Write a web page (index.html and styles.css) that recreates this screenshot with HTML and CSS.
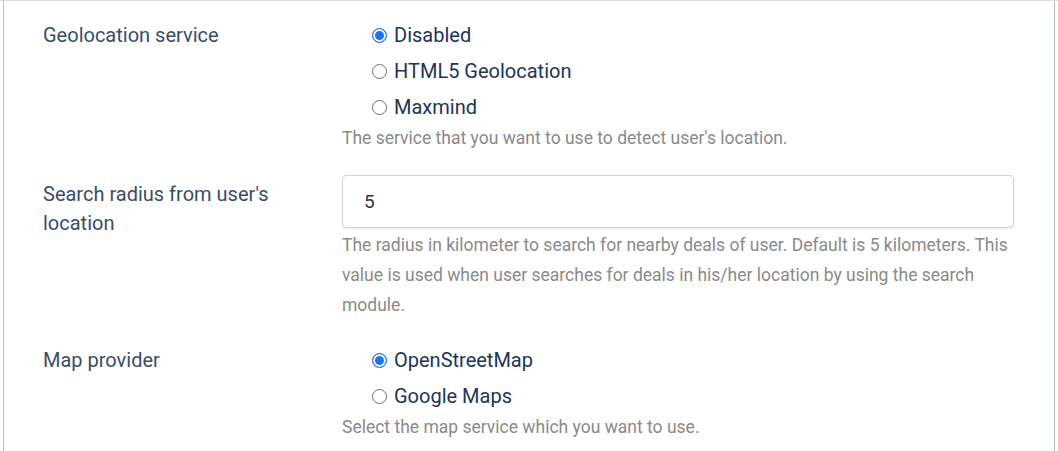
FILE: index.html
```html
<!DOCTYPE html>
<html>
<head>
<meta charset="utf-8">
<link rel="stylesheet" href="styles.css">
</head>
<body>
<div class="panel">
  <div class="row">
    <div class="label">Geolocation service</div>
    <div class="control">
      <div class="radios">
        <label class="radio"><span class="dot checked"></span>Disabled</label>
        <label class="radio"><span class="dot"></span>HTML5 Geolocation</label>
        <label class="radio"><span class="dot"></span>Maxmind</label>
      </div>
      <div class="help help-after-radios">The service that you want to use to detect user's location.</div>
    </div>
  </div>
  <div class="row">
    <div class="label label-input">Search radius from user's location</div>
    <div class="control">
      <div class="input">5</div>
      <div class="help help-after-input">The radius in kilometer to search for nearby deals of user. Default is 5 kilometers. This value is used when user searches for deals in his/her location by using the search module.</div>
    </div>
  </div>
  <div class="row">
    <div class="label">Map provider</div>
    <div class="control">
      <div class="radios">
        <label class="radio"><span class="dot checked"></span>OpenStreetMap</label>
        <label class="radio"><span class="dot"></span>Google Maps</label>
      </div>
      <div class="help help-after-radios">Select the map service which you want to use.</div>
    </div>
  </div>
</div>
</body>
</html>
```
FILE: styles.css
```css
html, body {
  margin: 0;
  padding: 0;
  background: #fff;
}
body {
  border-top: 1px solid #dcdcdc;
  font-family: Roboto, "Noto Sans", sans-serif;
  height: 450px;
  overflow: hidden;
}
.panel {
  margin-left: 3px;
  width: 1050px;
  height: 450px;
  border-left: 1px solid #b9bdcc;
  border-right: 1px solid #a9bccb;
  box-sizing: content-box;
  padding-top: 16px;
  display: flex;
  flex-direction: column;
  gap: 22px;
}
.row {
  display: grid;
  grid-template-columns: 299px 672px;
  padding-left: 39px;
}
.label {
  font-size: 20px;
  line-height: 29px;
  color: #3a4d68;
  padding-top: 4px;
  padding-right: 20px;
}
.label-input {
  padding-top: 5px;
}
.radios {
  display: flex;
  flex-direction: column;
  padding-left: 30px;
}
.radio {
  display: flex;
  align-items: center;
  height: 36px;
  font-size: 20px;
  color: #1d3557;
  gap: 7px;
}
.dot {
  width: 15px;
  height: 15px;
  border-radius: 50%;
  border: 1px solid #6f6f6f;
  box-sizing: border-box;
  margin-top: 1px;
  flex: none;
}
.dot.checked {
  border: 1.5px solid #1a73f8;
  background: #1a73f8;
  box-shadow: inset 0 0 0 2px #fff;
}
.help {
  font-size: 17.5px;
  line-height: 30px;
  color: #8a8a8a;
}
.help-after-radios {
  margin-top: -2px;
}
.help-after-input {
  margin-top: 2px;
}
.input {
  height: 53px;
  box-sizing: border-box;
  border: 1px solid #d4d4d4;
  border-radius: 4px;
  box-shadow: 0 1px 2px rgba(0,0,0,0.08);
  padding-left: 21px;
  display: flex;
  align-items: center;
  font-size: 19px;
  color: #333;
}
```
